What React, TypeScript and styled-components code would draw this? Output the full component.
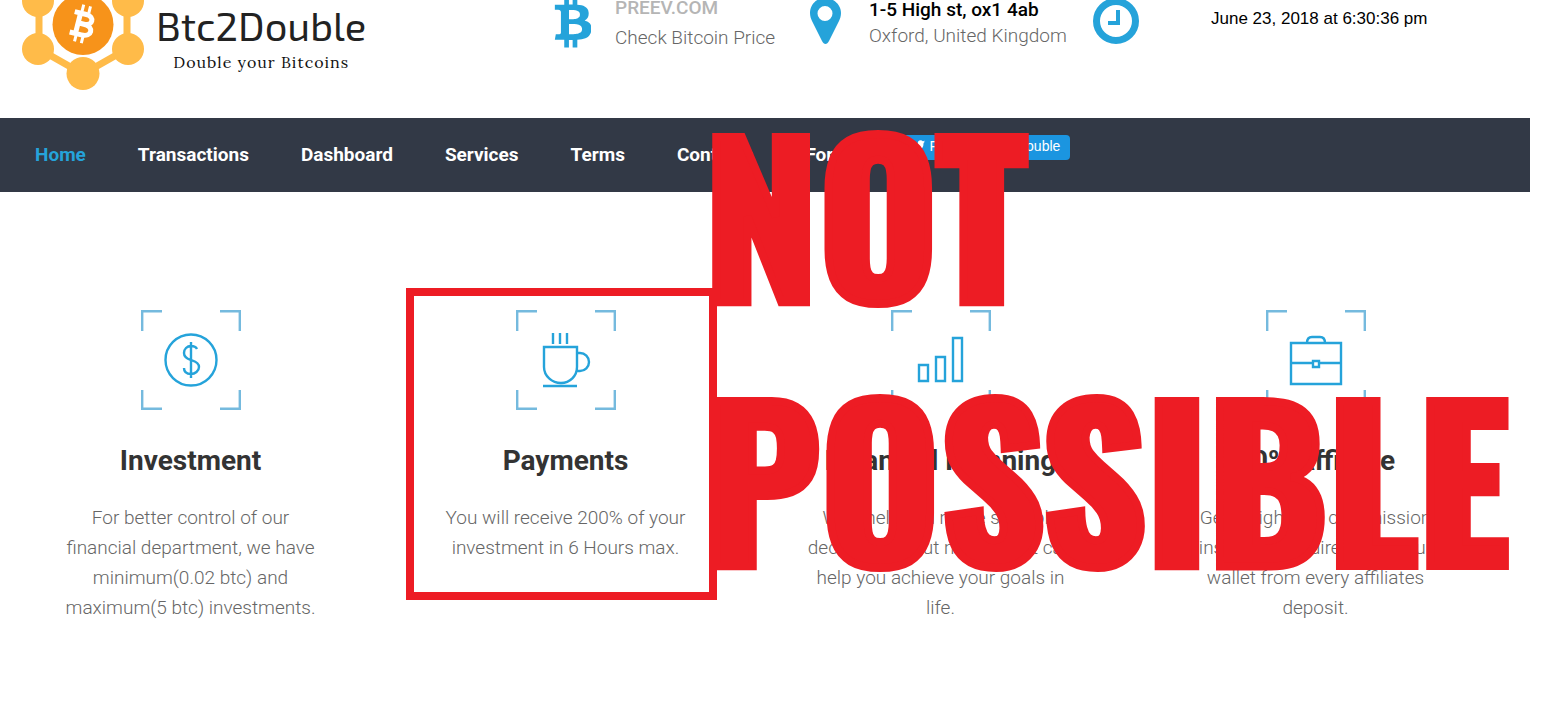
import React from 'react';
import styled, { createGlobalStyle } from 'styled-components';

const GlobalStyle = createGlobalStyle`
  *, *::after { box-sizing: border-box; }
  body {
    margin: 0;
    background: #fff;
    font-family: Roboto, "Liberation Sans", sans-serif;
    color: #666;
  }
`;

const Page = styled.div`
  position: relative;
  margin-right: 29px;
  padding-bottom: 84px;
`;

const Header = styled.header`
  display: grid;
  grid-template-columns: 553fr 257fr 283fr 437fr;
  height: 118px;
`;

const Brand = styled.a`
  display: flex;
  padding-left: 22px;
  color: #222;
  text-decoration: none;
`;

const BrandText = styled.span`
  display: flex;
  flex-direction: column;
  align-items: center;
  padding-left: 10px;
`;

const BrandName = styled.span`
  font: 400 40px/50px "Exo 2", "Open Sans", sans-serif;
`;

const Tagline = styled.span`
  font: 400 16px/24px Lora, "Liberation Serif", serif;
  letter-spacing: 1px;
  color: #111;
`;

const Info = styled.div`
  display: flex;
  align-items: flex-start;
`;

const InfoIcon = styled.svg<{ $width: number }>`
  flex: none;
  width: ${(p) => p.$width}px;
  height: 48px;
  fill: #25a3da;
`;

const InfoText = styled.div<{ $gap: number; $line: number }>`
  margin-top: ${(p) => 23 - p.$line}px;
  padding-left: ${(p) => p.$gap}px;
  font-size: 19px;
  font-weight: 300;
  line-height: ${(p) => p.$line}px;
  white-space: nowrap;
`;

const InfoTitle = styled.strong<{ $color: string }>`
  display: block;
  font-weight: 500;
  color: ${(p) => p.$color};
`;

const DateText = styled.time`
  padding: 9px 0 0 72px;
  font: 400 17px/20px "Liberation Sans", sans-serif;
  color: #000;
  white-space: nowrap;
`;

const Nav = styled.nav`
  display: flex;
  height: 74px;
  padding-left: 35px;
  background: #323946;
`;

const NavLinks = styled.div`
  display: flex;
  gap: 52px;
`;

const NavLink = styled.a<{ $active?: boolean }>`
  font-size: 19px;
  font-weight: 700;
  line-height: 74px;
  color: ${(p) => (p.$active ? '#25a3da' : '#fff')};
  text-decoration: none;
`;

const FollowLink = styled.a`
  display: flex;
  align-items: center;
  gap: 4px;
  height: 25px;
  margin: 17px 0 0 42px;
  padding: 0 10px 4px 9px;
  border-radius: 4px;
  background: #1b95e0;
  color: #fff;
  font: 400 14px/20px "Liberation Sans", sans-serif;
  text-decoration: none;
  white-space: nowrap;
`;

const Features = styled.main`
  display: grid;
  grid-template-columns: repeat(4, 1fr);
  padding: 118px 27px 0 3px;
`;

const Card = styled.section<{ $marked?: boolean }>`
  position: relative;
  display: flex;
  flex-direction: column;
  align-items: center;
  padding: 0 50px;
  text-align: center;

  &::after {
    content: '';
    display: ${(p) => (p.$marked ? 'block' : 'none')};
    position: absolute;
    z-index: 2;
    top: -22px;
    right: 36px;
    left: 28px;
    height: 312px;
    border: 8px solid #ed1c24;
  }
`;

const CardIcon = styled.svg`
  width: 100px;
  height: 100px;
  fill: none;
  stroke: #25a3da;
  stroke-width: 2.4;
`;

const CardTitle = styled.h2`
  margin: 31px 0 22px;
  font-size: 28px;
  font-weight: 700;
  line-height: 40px;
  color: #333;
`;

const CardText = styled.p`
  margin: 0;
  font-size: 19px;
  font-weight: 300;
  line-height: 30px;
  white-space: pre-line;
`;

const Stamp = styled.div`
  position: absolute;
  z-index: 1;
  top: 78px;
  left: 704px;
  display: flex;
  flex-direction: column;
  font: 700 204px/264px Oswald, Anton, "Roboto Condensed", sans-serif;
  color: #ed1c24;
  -webkit-text-stroke: 8px #ed1c24;
  pointer-events: none;
`;

const features = [
  {
    title: 'Investment',
    text: 'For better control of our\nfinancial department, we have\nminimum(0.02 btc) and\nmaximum(5 btc) investments.',
    icon: (
      <>
        <circle cx="50" cy="50" r="25.500" />
        <path d="M50 32v36M56 39c-1-2-3-3-6-3-4 0-7 3-7 7 0 5 4 6 7 7s8 2 8 7c0 4-4 7-8 7s-7-2-7-6" />
      </>
    ),
  },
  {
    title: 'Payments',
    text: 'You will receive 200% of your\ninvestment in 6 Hours max.',
    marked: true,
    icon: (
      <path d="M28 37h33v20c0 9-7 16-16 16s-17-7-17-16zM61 43h3a9 9 0 0 1 0 18h-4M27 76h34M37 23v11M44 23v11M51 23v11" />
    ),
  },
  {
    title: 'Financial Planning',
    text: "We'll help you make sensible\ndecisions about money that can\nhelp you achieve your goals in\nlife.",
    icon: <path d="M28 55h9v16h-9zM45 47h9v24h-9zM62 28h9v43h-9z" />,
  },
  {
    title: '10% Affiliate',
    text: 'Get a high 10% commission\ninstantly and directly to your\nwallet from every affiliates\ndeposit.',
    icon: (
      <path d="M25 33h50v41H25zM25 53h22M53 53h22M47 51h6v6h-6zM41 33c0-4 2-6 5-6h8c3 0 5 2 5 6" />
    ),
  },
];

const links = ['Home', 'Transactions', 'Dashboard', 'Services', 'Terms', 'Contacts', 'Forum'];

function Logo() {
  return (
    <svg width="124" height="90" viewBox="0 0 124 90" aria-hidden="true">
      <path d="M17 0v49l44 25 44-25V0" fill="none" stroke="#ffbb49" strokeWidth="7" />
      <g fill="#ffbb49">
        <circle cx="16" cy="1" r="16" />
        <circle cx="106" cy="1" r="16" />
        <circle cx="16" cy="49" r="16" />
        <circle cx="106" cy="49" r="16" />
        <circle cx="61" cy="73.500" r="16.500" />
      </g>
      <circle cx="61" cy="24.500" r="30.500" fill="#f7931a" />
      <g transform="rotate(14 61 24)" fill="none" stroke="#fff">
        <path d="M50 14h12c9 0 9 10 0 10h-6M62 24c11 0 11 11 0 11H50M56 14v21" strokeWidth="5" />
        <path d="M57 5v7M64 5v7M57 36v7M64 36v7" strokeWidth="3" />
      </g>
    </svg>
  );
}

export default function App() {
  return (
    <>
      <GlobalStyle />
      <Page>
        <Header>
          <Brand href="#">
            <Logo />
            <BrandText>
              <BrandName>Btc2Double</BrandName>
              <Tagline>Double your Bitcoins</Tagline>
            </BrandText>
          </Brand>
          <Info>
            <InfoIcon $width={38} viewBox="190 185 1250 1577" aria-hidden="true">
              <path d="M1362 597q18 182-131 258 117 28 175 103t45 214q-7 71-32.500 125t-64.500 89-97 58.500-121.500 34.500-145.500 15v255h-154v-251q-80 0-122-1v252h-154v-255q-18 0-54-.5t-55-.5h-200l31-183h111q50 0 58-51v-402h16q-6-1-16-1v-287q-13-68-89-68h-111v-164l212 1q64 0 97-1v-252h154v247q82-2 122-2v-245h154v252q79 7 140 22.500t113 45 82.500 78 36.500 114.500zM1147 1142q0-36-15-64t-37-46-57.500-30.500-65.500-18.500-74-9-69-3-64.500 1-47.500 1v338q8 0 37 .5t48 .5 53-1.500 58.500-4 57-8.500 55.500-14 47.500-21 39.500-30 24.500-40 9.500-51zM1076 666q0-33-12.500-58.500t-30.500-42-48-28-55-16.500-61.500-8-58-2.500-54 1-39.500.5v307q5 0 34.500.5t46.500 0 50-2 55-5.500 51.500-11 48.500-18.500 37-27 27-38.500 9-51z" />
            </InfoIcon>
            <InfoText $gap={24} $line={30}>
              <InfoTitle $color="#b5b5b5">PREEV.COM</InfoTitle>
              Check Bitcoin Price
            </InfoText>
          </Info>
          <Info>
            <InfoIcon $width={31} viewBox="0 0 31 48" aria-hidden="true">
              <path
                fillRule="evenodd"
                d="M15 -2C6-2 0 5 0 13c0 3 1 6 2 8l10 20c2 4 5 4 7 0l10-20c1-2 2-5 2-8C31 5 24-2 15-2zM15 6a7 7 0 1 1 0 15 7 7 0 0 1 0-15z"
              />
            </InfoIcon>
            <InfoText $gap={28} $line={26}>
              <InfoTitle $color="#000">1-5 High st, ox1 4ab</InfoTitle>
              Oxford, United Kingdom
            </InfoText>
          </Info>
          <Info>
            <InfoIcon $width={46} viewBox="0 0 46 48" aria-hidden="true">
              <circle cx="23" cy="21" r="19.500" fill="none" stroke="#25a3da" strokeWidth="7" />
              <path d="M23 10h4v15H15v-4h8z" />
            </InfoIcon>
            <DateText dateTime="2018-06-23T18:30:36">June 23, 2018 at 6:30:36 pm</DateText>
          </Info>
        </Header>
        <Nav>
          <NavLinks>
            {links.map((name, i) => (
              <NavLink key={name} href="#" $active={i === 0}>
                {name}
              </NavLink>
            ))}
          </NavLinks>
          <FollowLink href="#">
            <svg width="14" height="12" viewBox="0 0 24 20" fill="#fff" aria-hidden="true">
              <path d="M24 2.400a10 10 0 0 1-2.800.8A5 5 0 0 0 23.300.500a10 10 0 0 1-3.100 1.200 4.900 4.900 0 0 0-8.400 4.500A14 14 0 0 1 1.700 1a4.900 4.900 0 0 0 1.500 6.600A5 5 0 0 1 1 7a4.900 4.900 0 0 0 3.900 4.900 5 5 0 0 1-2.200.1 4.900 4.900 0 0 0 4.600 3.400A10 10 0 0 1 0 17.500 14 14 0 0 0 21.500 5 10 10 0 0 0 24 2.400z" />
            </svg>
            Follow @Btc2Double
          </FollowLink>
        </Nav>
        <Features>
          {features.map((f) => (
            <Card key={f.title} $marked={f.marked}>
              <CardIcon viewBox="0 0 100 100" aria-hidden="true">
                <path
                  d="M1.200 21V1.200H21M79 1.200h19.800V21M98.800 80v18.800H79M21 98.800H1.200V80"
                  stroke="#75bade"
                />
                {f.icon}
              </CardIcon>
              <CardTitle>{f.title}</CardTitle>
              <CardText>{f.text}</CardText>
            </Card>
          ))}
        </Features>
        <Stamp>
          <span>NOT</span>
          <span>POSSIBLE</span>
        </Stamp>
      </Page>
    </>
  );
}
